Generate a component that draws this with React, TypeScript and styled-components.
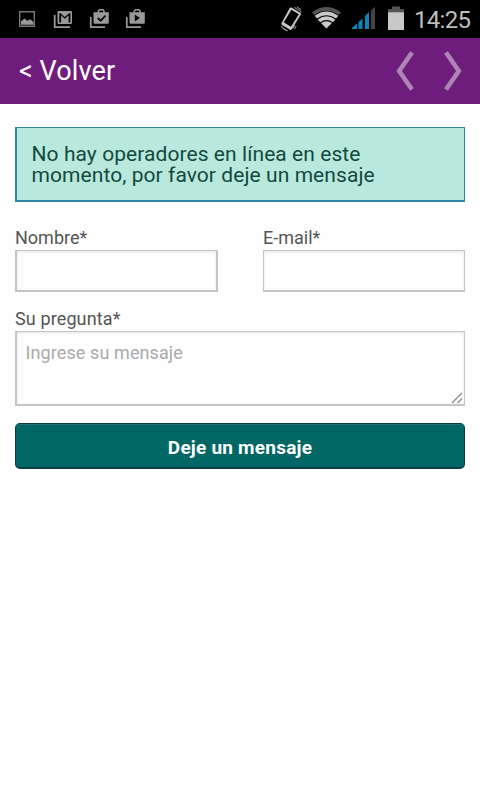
import React from "react";
import styled, { createGlobalStyle } from "styled-components";

const GlobalStyle = createGlobalStyle`
  * { box-sizing: border-box; }
  body { margin: 0; background: #fefefe; font-family: Roboto, "Liberation Sans", sans-serif; }
`;

const Screen = styled.div`
  display: flex;
  flex-direction: column;
  width: 480px;
  height: 800px;
  overflow: hidden;
  background: #fefefe;
`;

const StatusBar = styled.div`
  display: flex;
  justify-content: space-between;
  height: 38px;
  flex: none;
  background: #000;
`;

const StatusIcons = styled.svg`
  display: block;
  flex: none;
`;

const StatusRight = styled.div`
  display: flex;
`;

const Clock = styled.span`
  width: 66px;
  font-size: 24px;
  line-height: 40px;
  letter-spacing: -0.7px;
  color: #bebebe;
  white-space: nowrap;
`;

const Header = styled.header`
  display: flex;
  align-items: center;
  justify-content: space-between;
  height: 66px;
  flex: none;
  padding-left: 19px;
  background: #6f1d7c;
`;

const Back = styled.a`
  font-size: 27px;
  line-height: 32px;
  letter-spacing: 0.1px;
  color: #fff;
  white-space: nowrap;
`;

const Arrows = styled.svg`
  display: block;
`;

const Form = styled.form`
  display: flex;
  flex-direction: column;
  padding: 23px 15px 0;
`;

const Notice = styled.div`
  height: 75px;
  padding: 16px 14.5px 0;
  border: solid #2c87a3;
  border-width: 1px 1px 2px 2px;
  background: #b9e9dd;
  color: #124a3e;
  font-size: 21px;
  line-height: 21px;
  letter-spacing: 0.07px;
  white-space: nowrap;
`;

const FieldRow = styled.div`
  display: grid;
  grid-template-columns: 203px 202px;
  justify-content: space-between;
  margin-top: 25px;
`;

const Field = styled.label<{ $top?: number }>`
  display: flex;
  flex-direction: column;
  margin-top: ${(p) => p.$top ?? 0}px;
`;

const Caption = styled.span<{ $spacing?: number }>`
  height: 23px;
  font-size: 18px;
  line-height: 22px;
  letter-spacing: ${(p) => p.$spacing ?? 0}px;
  color: #555;
`;

const Input = styled.input<{ $edges: string }>`
  width: 100%;
  height: 42px;
  margin: 0;
  padding: 0 9px;
  border: solid #c5c5c5;
  border-width: ${(p) => p.$edges};
  border-radius: 0;
  outline: none;
  background: #fefefe;
  box-shadow: inset 0 1px 3px rgba(0, 0, 0, 0.1);
  font: 18px Roboto, sans-serif;
`;

const MessageBox = styled.div`
  position: relative;
  height: 75px;
`;

const Message = styled.textarea`
  display: block;
  width: 100%;
  height: 75px;
  margin: 0;
  padding: 10px 8.5px;
  border: solid #c5c5c5;
  border-width: 1px 1px 2px 2px;
  border-radius: 0;
  outline: none;
  resize: none;
  background: #fefefe;
  box-shadow: inset 0 1px 3px rgba(0, 0, 0, 0.1);
  font: 18px/22px Roboto, sans-serif;
  letter-spacing: 0.1px;
  &::placeholder { color: #aaa; opacity: 1; }
`;

const Grip = styled.svg`
  position: absolute;
  right: 2px;
  bottom: 2px;
`;

const Submit = styled.button`
  height: 46px;
  margin: 17px 0 0;
  padding: 3px 0 0;
  border: 1px solid #083f42;
  border-bottom-width: 2px;
  border-radius: 5px;
  background: #006764;
  box-shadow: inset 0 1px 0 #26706f;
  color: #fff;
  font: 700 19px Roboto, sans-serif;
  letter-spacing: 0.22px;
`;

const Notifications = () => (
  <StatusIcons width="160" height="38" fill="#999">
    <path d="M19.7 11.7h14.6v14.6H19.7z" fill="none" stroke="#777" strokeWidth="1.4" />
    <path d="M21 24.8v-3.3l3.5-3 3 2.3 3-1.5 3 3v2.5z" />
    <path d="M54.7 15v12.2H70" fill="none" stroke="#999" strokeWidth="1.8" />
    <path fillRule="evenodd" d="M58.5 11h12.3q1.2 0 1.2 1.2v10.6q0 1.2-1.2 1.2H58.5q-1 0-1-1.2V12.2q0-1.2 1-1.2zm.8 2.2V22.4h1.8v-7.2l3.7 3.6 3.8-3.6v7.2h1.8v-9.2h-1.3l-4.3 3.9-4.2-3.9z" />
    {[90, 126].map((x) => (
      <g key={x} transform={`translate(${x} 0)`}>
        <path d="M.8 17v10.2H15" fill="none" stroke="#999" strokeWidth="1.7" />
        <path d="M8.3 13v-2l1.2-1.2h3.4L14 11v2" fill="none" stroke="#999" strokeWidth="1.6" />
        <path d="M3.5 12.3h15.3v10q0 1.5-1.3 1.5H4.8q-1.3 0-1.3-1.5z" />
      </g>
    ))}
    <path d="M97.8 18l2.8 2.7 5-5" fill="none" stroke="#080808" strokeWidth="1.8" />
    <path d="M134.8 14.5v7l5.2-3.5z" fill="#080808" />
  </StatusIcons>
);

const SystemIcons = () => (
  <StatusIcons width="134" height="38" viewBox="280 0 134 38">
    <g stroke="#c8c8c8">
      <path fill="#c8c8c8" fillRule="evenodd" stroke="none" d="M289.7 8q.7-1 1.8-.4l8.7 5.2q1.2.7.5 1.9l-8.9 14.6q-.8 1.1-1.9.5l-8-5q-1-.8-.3-1.9zM291.4 9.7 283.8 22.3 290.9 26.7 298.9 14.2z" />
      <path fill="none" d="M281.8 25.5v1.8l6 3.7M283 28.5l3.3 2M294.2 7.4l6.6 3.8v1.4M296.7 6.9l4.3 2.6M292.8 28.5l2.1-3.4M294.3 29.2l1.9-3.1" strokeWidth=".8" />
    </g>
    <path d="M312 12.4Q326.3 1.5 341 12.4L338.8 15Q326.4 6.3 314.2 15z" fill="#555" />
    <path d="M314.7 15.8Q326.4 7.2 338.3 15.8L336 18.6Q326.4 12 317 18.6z" fill="#c8c8c8" />
    <path d="M317.8 19.5Q326.4 13.2 335.3 19.5L333 22.2Q326.4 17.8 320.2 22.2z" fill="#c8c8c8" />
    <path d="M321 23.1Q326.4 19.3 332 23.1L326.4 28.5z" fill="#c8c8c8" />
    <path d="M352 29v-1l5-4.5V29zM358.5 29v-6.8l4-3.8V29zM365 29V16l4-4v17z" fill="#0788b9" />
    <path d="M371 29V10.5l4-4V29z" fill="#444" />
    <path d="M392 6.5h8V9h4v3.3h-16V9h4z" fill="#555" />
    <path d="M388 12.2h16V30h-16z" fill="#c8c8c8" />
  </StatusIcons>
);

export default function App() {
  return (
    <>
      <GlobalStyle />
      <Screen>
        <StatusBar>
          <Notifications />
          <StatusRight>
            <SystemIcons />
            <Clock>14:25</Clock>
          </StatusRight>
        </StatusBar>
        <Header>
          <Back>&lt; Volver</Back>
          <Arrows width="90" height="66" viewBox="390 38 90 66" fill="none" stroke="#ae83b6" strokeWidth="4.6">
            <path d="M412 52.5 399.2 71 412 89.5M446 52.5 458.8 71 446 89.5" />
          </Arrows>
        </Header>
        <Form>
          <Notice>
            No hay operadores en línea en este
            <br />
            momento, por favor deje un mensaje
          </Notice>
          <FieldRow>
            <Field>
              <Caption>Nombre*</Caption>
              <Input $edges="1px 2px 2px 2px" />
            </Field>
            <Field>
              <Caption>E-mail*</Caption>
              <Input $edges="1px 1px 2px 1px" />
            </Field>
          </FieldRow>
          <Field $top={16}>
            <Caption $spacing={0.12}>Su pregunta*</Caption>
            <MessageBox>
              <Message placeholder="Ingrese su mensaje" />
              <Grip width="12" height="12" fill="none" stroke="#888" strokeWidth="1.2">
                <path d="M1 11 11 1M6.5 11 11 6.5" />
              </Grip>
            </MessageBox>
          </Field>
          <Submit type="button">Deje un mensaje</Submit>
        </Form>
      </Screen>
    </>
  );
}
